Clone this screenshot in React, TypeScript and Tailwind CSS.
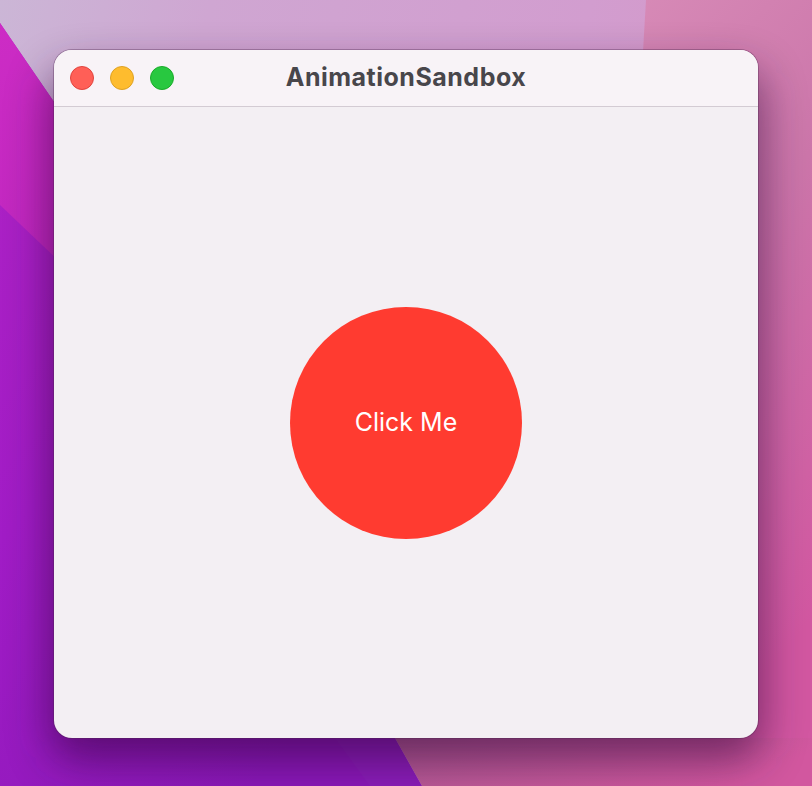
import React from 'react';

function Wallpaper() {
  return (
    <svg className="absolute inset-0 h-full w-full" viewBox="0 0 812 786" preserveAspectRatio="none">
      <defs>
        <linearGradient id="sky" x1="0" y1="0" x2="1" y2="0.2">
          <stop offset="0" stopColor="#cbb6d6" />
          <stop offset="0.25" stopColor="#cfa6d2" />
          <stop offset="0.7" stopColor="#d29dcf" />
          <stop offset="1" stopColor="#d596c6" />
        </linearGradient>
        <linearGradient id="magenta" x1="0" y1="0" x2="0.3" y2="1">
          <stop offset="0" stopColor="#cd2cc5" />
          <stop offset="1" stopColor="#bd26be" />
        </linearGradient>
        <linearGradient id="purple" x1="0" y1="0" x2="0.6" y2="1">
          <stop offset="0" stopColor="#b023c4" />
          <stop offset="0.5" stopColor="#a11cc6" />
          <stop offset="1" stopColor="#8a18b8" />
        </linearGradient>
        <linearGradient id="rightPink" x1="0" y1="0" x2="0.3" y2="1">
          <stop offset="0" stopColor="#d88cb8" />
          <stop offset="0.45" stopColor="#cc76aa" />
          <stop offset="1" stopColor="#d257a1" />
        </linearGradient>
        <linearGradient id="bottomPink" x1="0" y1="0" x2="1" y2="0.3">
          <stop offset="0" stopColor="#b05c92" />
          <stop offset="1" stopColor="#d2579f" />
        </linearGradient>
        <filter id="blur" x="-20%" y="-20%" width="140%" height="140%">
          <feGaussianBlur stdDeviation="22" />
        </filter>
      </defs>
      <rect width="812" height="786" fill="url(#sky)" />
      <polygon points="646,0 812,0 812,786 600,786" fill="url(#rightPink)" />
      <polygon points="0,23 100,169 395,738 422,786 0,786" fill="url(#purple)" />
      <polygon points="0,23 100,169 100,300 0,205" fill="url(#magenta)" />
      <polygon points="395,738 812,738 812,786 422,786" fill="url(#bottomPink)" />
      <polygon points="335,738 395,738 422,786 370,786" fill="#8a22b8" opacity="0.5" />
      <rect x="50" y="70" width="712" height="690" rx="24" fill="#2a0535" opacity="0.55" filter="url(#blur)" />
    </svg>
  );
}

export default function App() {
  return (
    <div className="relative h-[786px] w-[812px] overflow-hidden font-['Inter','Liberation_Sans',sans-serif]">
      <Wallpaper />
      <div className="relative flex px-[54px] pt-[50px] pb-[48px]">
        <div className="flex h-[688px] w-[704px] flex-col overflow-hidden rounded-[18px] bg-[#f3eff3] shadow-[0_0_0_1px_rgba(80,40,80,0.35)]">
          <div className="relative flex h-[57px] shrink-0 items-center border-b border-[#d3cbd3] bg-[#f8f3f7]">
            <div className="flex items-center gap-[16px] pl-[16px]">
              <span className="h-[24px] w-[24px] rounded-full border border-[#e0443e] bg-[#ff5f57]" />
              <span className="h-[24px] w-[24px] rounded-full border border-[#dea123] bg-[#febc2e]" />
              <span className="h-[24px] w-[24px] rounded-full border border-[#1aab29] bg-[#28c840]" />
            </div>
            <div className="pointer-events-none absolute inset-0 flex items-center justify-center">
              <span className="text-[25px] font-bold tracking-[0.5px] text-[#48464b]">AnimationSandbox</span>
            </div>
          </div>
          <div className="flex flex-1 items-center justify-center">
            <button className="flex h-[232px] w-[232px] items-center justify-center rounded-full bg-[#ff3b30] text-[25px] text-white">
              Click Me
            </button>
          </div>
        </div>
      </div>
    </div>
  );
}
